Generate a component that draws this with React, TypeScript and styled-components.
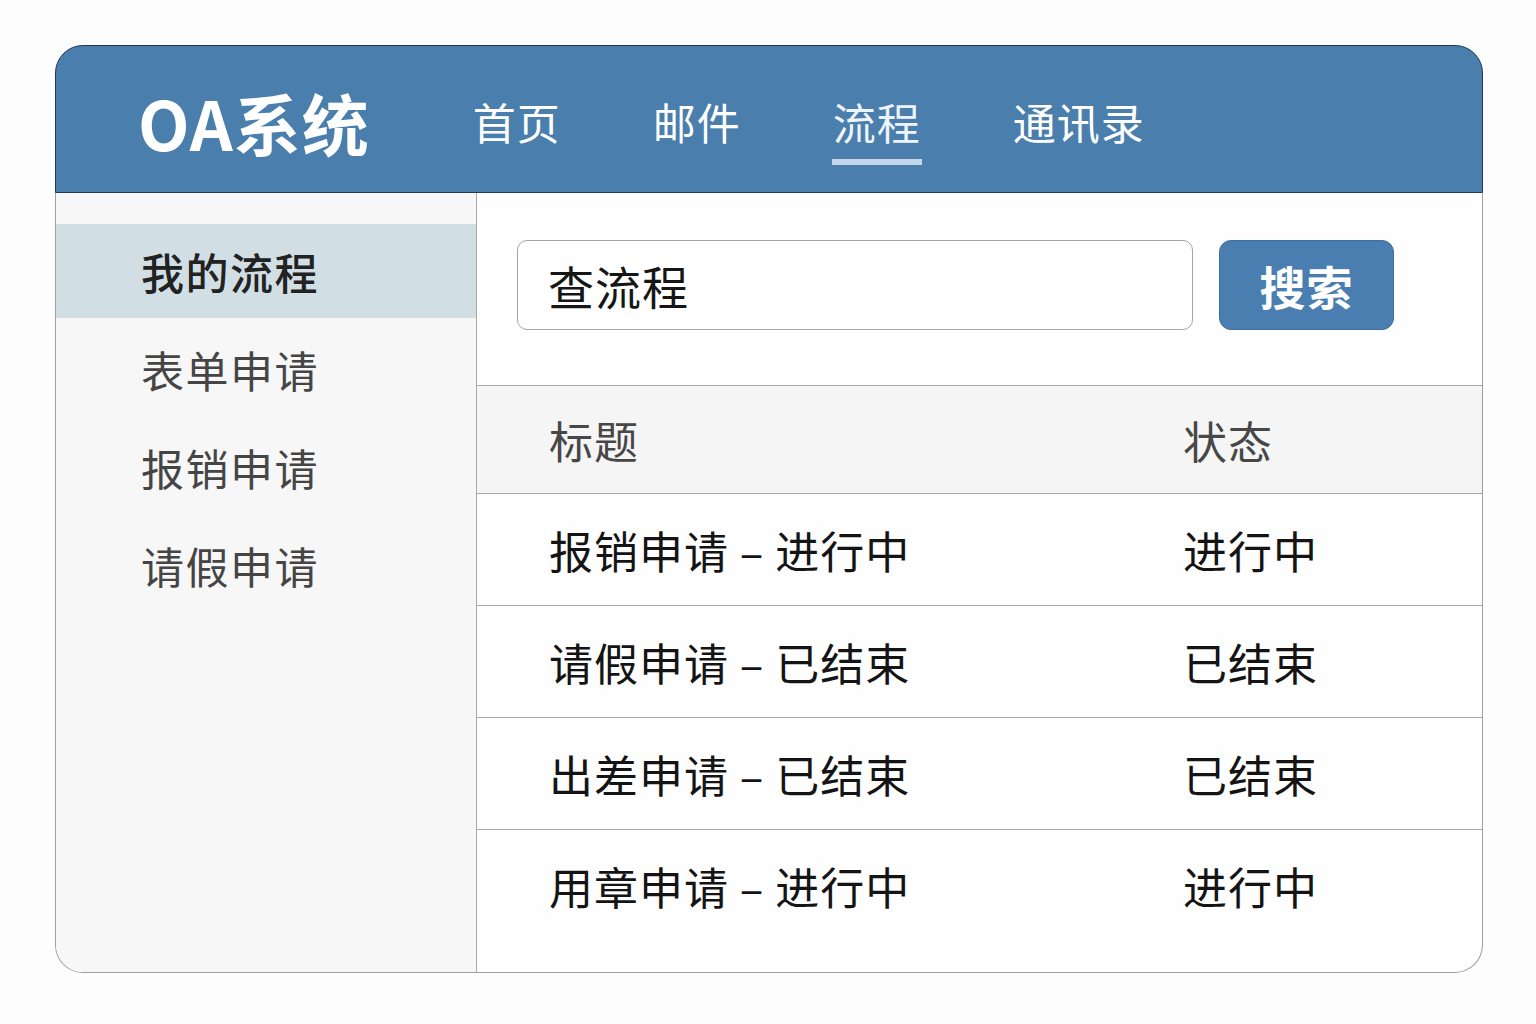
import React from "react";
import styled, { createGlobalStyle } from "styled-components";

const GlobalStyle = createGlobalStyle`
    html, body {
        margin: 0;
        padding: 0;
        background: #fdfdfd;
        font-family: "Noto Sans CJK SC", "Noto Sans", sans-serif;
    }
`

const StyledPage = styled.div`
    padding: 45px 0 0 55px;
`

const StyledCard = styled.div`
    width: 1428px;
    height: 928px;
    display: flex;
    flex-direction: column;
`

const StyledHeader = styled.header`
    flex: 0 0 148px;
    box-sizing: border-box;
    display: flex;
    align-items: center;
    padding-left: 82px;
    background: #4a7ead;
    border: 1.5px solid #1f3954;
    border-radius: 28px 28px 0 0;
`

const StyledLogo = styled.div`
    font-size: 67px;
    font-weight: 700;
    letter-spacing: 1px;
    color: #ffffff;
    line-height: 1;
    margin-right: 103px;
    margin-top: 4px;
`

const StyledNav = styled.nav`
    display: flex;
    gap: 92px;
    height: 100%;
    align-items: center;
    padding-top: 4px;
`

const StyledNavItem = styled.a<{ $active?: boolean }>`
    position: relative;
    font-size: 43px;
    letter-spacing: 1px;
    color: ${p => (p.$active ? "#eef4fb" : "#ffffff")};
    line-height: 1;
    cursor: pointer;

    &::after {
        content: "";
        display: ${p => (p.$active ? "block" : "none")};
        position: absolute;
        left: -1px;
        right: -1px;
        bottom: -22px;
        height: 6px;
        background: #c3d6ea;
    }
`

const StyledBody = styled.div`
    flex: 1;
    display: flex;
    border: 1.5px solid #9e9e9e;
    border-top: none;
    border-radius: 0 0 28px 28px;
    overflow: hidden;
    background: #fefefe;
`

const StyledSidebar = styled.aside`
    flex: 0 0 420px;
    background: #f7f7f7;
    border-right: 1.5px solid #a8a8a8;
    padding-top: 31px;
    display: flex;
    flex-direction: column;
    gap: 4px;
`

const StyledSideItem = styled.div<{ $active?: boolean }>`
    height: 94px;
    display: flex;
    align-items: center;
    padding-left: 85px;
    font-size: 43px;
    letter-spacing: 1.5px;
    font-weight: ${p => (p.$active ? 500 : 400)};
    color: ${p => (p.$active ? "#222222" : "#454545")};
    background: ${p => (p.$active ? "#d1dfe5" : "transparent")};
`

const StyledMain = styled.main`
    flex: 1;
    display: flex;
    flex-direction: column;
`

const StyledSearchBar = styled.div`
    display: flex;
    align-items: center;
    gap: 26px;
    padding: 47px 0 55px 40px;
    border-bottom: 1.5px solid #a8a8a8;
`

const StyledInput = styled.div`
    width: 676px;
    height: 90px;
    box-sizing: border-box;
    border: 1.5px solid #a5a5a5;
    border-radius: 10px;
    background: #ffffff;
    display: flex;
    align-items: center;
    padding-left: 30px;
    font-size: 46px;
    letter-spacing: 1px;
    color: #161616;
`

const StyledButton = styled.button`
    width: 175px;
    height: 90px;
    border: 1px solid #3f6f9c;
    border-radius: 12px;
    background: #4a7eb0;
    color: #ffffff;
    font-family: inherit;
    font-size: 46px;
    font-weight: 700;
    letter-spacing: 1px;
    cursor: pointer;
`

const StyledRow = styled.div<{ $head?: boolean }>`
    display: grid;
    grid-template-columns: 634px 1fr;
    align-items: center;
    padding-left: 72px;
    height: ${p => (p.$head ? "107px" : "111px")};
    background: ${p => (p.$head ? "#f5f5f5" : "transparent")};
    border-bottom: 1.5px solid #a8a8a8;
    font-size: 44px;
    letter-spacing: 1px;
    color: ${p => (p.$head ? "#474747" : "#141414")};

    &:last-child {
        border-bottom: none;
    }
`

const navItems = ["首页", "邮件", "流程", "通讯录"]
const sideItems = ["我的流程", "表单申请", "报销申请", "请假申请"]
const rows = [
    ["报销申请 – 进行中", "进行中"],
    ["请假申请 – 已结束", "已结束"],
    ["出差申请 – 已结束", "已结束"],
    ["用章申请 – 进行中", "进行中"],
]

const App = (): JSX.Element => {
    return (
        <>
        <GlobalStyle />
        <StyledPage>
            <StyledCard>
                <StyledHeader>
                    <StyledLogo>OA系统</StyledLogo>
                    <StyledNav>
                        {navItems.map(item => (
                            <StyledNavItem key={item} $active={item === "流程"}>{item}</StyledNavItem>
                        ))}
                    </StyledNav>
                </StyledHeader>
                <StyledBody>
                    <StyledSidebar>
                        {sideItems.map((item, i) => (
                            <StyledSideItem key={item} $active={i === 0}>{item}</StyledSideItem>
                        ))}
                    </StyledSidebar>
                    <StyledMain>
                        <StyledSearchBar>
                            <StyledInput>查流程</StyledInput>
                            <StyledButton>搜索</StyledButton>
                        </StyledSearchBar>
                        <StyledRow $head>
                            <span>标题</span>
                            <span>状态</span>
                        </StyledRow>
                        {rows.map(([title, status]) => (
                            <StyledRow key={title}>
                                <span>{title}</span>
                                <span>{status}</span>
                            </StyledRow>
                        ))}
                    </StyledMain>
                </StyledBody>
            </StyledCard>
        </StyledPage>
        </>
    )
}

export default App;
